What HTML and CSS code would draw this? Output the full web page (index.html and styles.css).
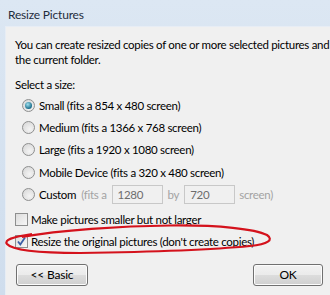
FILE: index.html
```html
<!DOCTYPE html>
<html>
<head>
<meta charset="utf-8">
<link rel="stylesheet" href="styles.css">
</head>
<body>
<div class="window">
  <div class="titlebar">Resize Pictures</div>
  <div class="content">
    <p class="intro">You can create resized copies of one or more selected pictures and place them in<br>the current folder.</p>
    <p class="label">Select a size:</p>
    <div class="options">
      <div class="opt"><span class="radio on"></span><span>Small (fits a 854 x 480 screen)</span></div>
      <div class="opt"><span class="radio"></span><span>Medium (fits a 1366 x 768 screen)</span></div>
      <div class="opt"><span class="radio"></span><span>Large (fits a 1920 x 1080 screen)</span></div>
      <div class="opt"><span class="radio"></span><span>Mobile Device (fits a 320 x 480 screen)</span></div>
      <div class="opt custom"><span class="radio"></span><span class="cname">Custom</span><span class="dis">(fits a</span><span class="field">1280</span><span class="dis by">by</span><span class="field">720</span><span class="dis scr">screen)</span></div>
    </div>
    <div class="check"><span class="box"></span><span>Make pictures smaller but not larger</span></div>
    <div class="check second"><span class="box on"><svg width="11" height="11" viewBox="0 0 11 11"><path d="M2 5.5 L4.3 8.5 L9 1.5" fill="none" stroke="#3a5ea6" stroke-width="1.8"/></svg></span><span>Resize the original pictures (don't create copies)</span></div>
    <div class="buttons">
      <button class="btn basic">&lt;&lt; Basic</button>
      <button class="btn ok">OK</button>
    </div>
  </div>
  <svg class="circle" width="330" height="295" viewBox="0 0 330 295">
    <path d="M22 237 C60 230 120 226 170 225.5 C220 225 255 229 267 235 C274 240 268 244 250 246 C210 250 150 252 80 253 C40 253 12 250 7 244 C4 240 12 237 32 234" fill="none" stroke="#d4121c" stroke-width="2.2"/>
  </svg>
</div>
</body>
</html>
```
FILE: styles.css
```css
html, body {
  margin: 0;
  padding: 0;
}
body {
  width: 330px;
  height: 295px;
  overflow: hidden;
  font-family: Lato, "Noto Sans", sans-serif;
  font-size: 11.5px;
  letter-spacing: -0.3px;
  color: #000;
}
.window {
  position: relative;
  width: 330px;
  height: 295px;
  background: linear-gradient(#dce7f3, #cfdded);
  display: flex;
  flex-direction: column;
}
.titlebar {
  height: 26px;
  line-height: 30px;
  padding-left: 8px;
  font-size: 12px;
  letter-spacing: -0.2px;
  color: #1f2d3d;
}
.content {
  flex: 1;
  margin-left: 5px;
  background: #f0f0f0;
  border-top: 1px solid #e7edf5;
  border-left: 1px solid #e7edf5;
  padding: 10px 0 0 9px;
  white-space: nowrap;
  overflow: hidden;
}
p {
  margin: 0;
}
.intro {
  line-height: 15px;
}
.label {
  margin-top: 10px;
  line-height: 15px;
}
.options {
  margin-top: 2px;
  padding-left: 7px;
  display: flex;
  flex-direction: column;
}
.opt {
  height: 22.4px;
  display: flex;
  align-items: center;
}
.radio {
  width: 11px;
  height: 11px;
  border-radius: 50%;
  border: 1px solid #8e8f8f;
  background: radial-gradient(circle at 60% 65%, #f4f4f4, #d4d4d4);
  margin-right: 4px;
  position: relative;
  box-sizing: content-box;
}
.radio.on::after {
  content: "";
  position: absolute;
  left: 2px;
  top: 2px;
  width: 7px;
  height: 7px;
  border-radius: 50%;
  background: radial-gradient(circle at 40% 35%, #9fe0ee, #1a6c8a 70%, #0e4f69);
}
.cname {
  margin-right: 5px;
}
.dis {
  color: #a3a3a3;
}
.by {
  margin: 0 5px 0 5px;
}
.scr {
  margin-left: 4px;
}
.field {
  box-sizing: border-box;
  width: 51px;
  height: 19px;
  line-height: 17px;
  border: 1px solid #c8c8c8;
  padding-left: 5px;
  margin-left: 5px;
  color: #6d6d6d;
  background: #f0f0f0;
}
.by + .field {
  margin-left: 0;
}
.check {
  margin-top: 6px;
  height: 16px;
  display: flex;
  align-items: center;
}
.check.second {
  margin-top: 6px;
}
.box {
  width: 11px;
  height: 11px;
  border: 1px solid #8e8f8f;
  background: linear-gradient(135deg, #dcdcdc, #f7f7f7);
  margin-right: 3px;
  display: flex;
  align-items: center;
  justify-content: center;
  box-sizing: content-box;
}
.box svg {
  display: block;
}
.buttons {
  margin-top: 14px;
  display: flex;
  justify-content: space-between;
  width: 307px;
  padding-left: 1px;
}
.btn {
  height: 22px;
  font-family: inherit;
  font-size: 12px;
  letter-spacing: -0.2px;
  color: #000;
  border: 1px solid #707070;
  border-radius: 3px;
  background: linear-gradient(#f2f2f2 0%, #ebebeb 50%, #dddddd 50%, #cfcfcf 100%);
  box-shadow: inset 0 0 0 1px #fcfcfc;
  padding: 0;
  margin: 0;
}
.basic {
  width: 72px;
}
.ok {
  width: 70px;
}
.circle {
  position: absolute;
  left: 0;
  top: 0;
  pointer-events: none;
}
```
